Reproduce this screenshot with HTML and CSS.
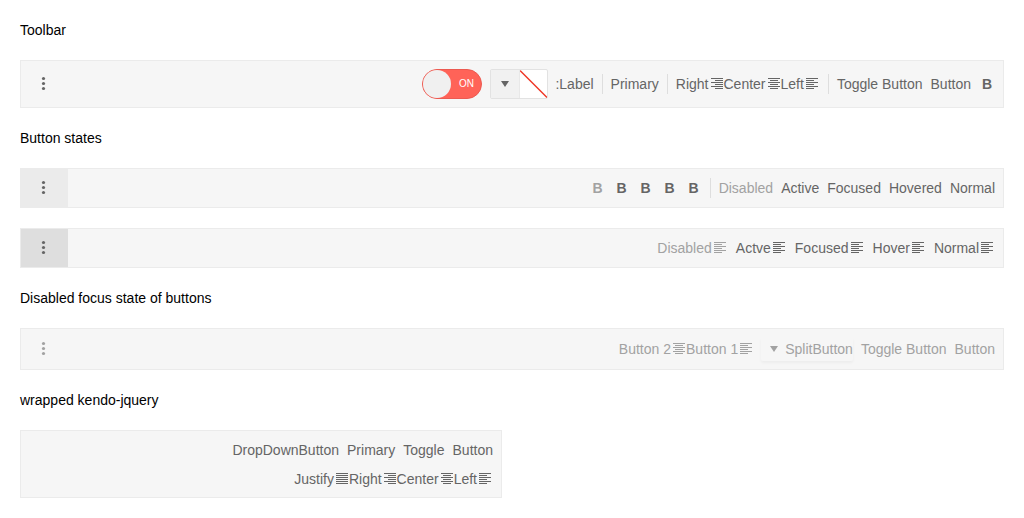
FILE: index.html
```
<!DOCTYPE html>
<html lang="en">
<head>
<meta charset="utf-8">
<title>Toolbar</title>
<link rel="stylesheet" href="styles.css">
</head>
<body>
<svg class="defs" width="0" height="0">
  <symbol id="left" viewBox="0 0 16 16"><path d="M2 2h12v1H2zM2 4h8v1H2zM2 6h12v1H2zM2 8h8v1H2zM2 10h12v1H2zM2 12h8v1H2z"/></symbol>
  <symbol id="center" viewBox="0 0 16 16"><path d="M2 2h12v1H2zM4 4h8v1H4zM2 6h12v1H2zM4 8h8v1H4zM2 10h12v1H2zM4 12h8v1H4z"/></symbol>
  <symbol id="right" viewBox="0 0 16 16"><path d="M2 2h12v1H2zM6 4h8v1H6zM2 6h12v1H2zM6 8h8v1H6zM2 10h12v1H2zM6 12h8v1H6z"/></symbol>
  <symbol id="justify" viewBox="0 0 16 16"><path d="M2 2h12v1H2zM2 4h12v1H2zM2 6h12v1H2zM2 8h12v1H2zM2 10h12v1H2zM2 12h12v1H2z"/></symbol>
  <symbol id="dots" viewBox="0 0 16 16"><circle cx="7.5" cy="2.5" r="1.6"/><circle cx="7.5" cy="7.5" r="1.6"/><circle cx="7.5" cy="12.5" r="1.6"/></symbol>
  <symbol id="caret" viewBox="0 0 16 16"><path d="M4 5h8l-4 6z"/></symbol>
</svg>
<main class="page">
  <h2 class="title">Toolbar</h2>
  <div class="toolbar tall">
    <div class="overflow"><svg class="icon"><use href="#dots"/></svg></div>
    <div class="tools">
      <div class="switch"><span class="handle"></span><span class="on">ON</span></div>
      <div class="picker"><div class="picker-arrow"><svg class="icon"><use href="#caret"/></svg></div><svg class="swatch" viewBox="0 0 28 28"><path d="M0 0L28 28"/></svg></div>
      <span class="label">:Label</span>
      <i class="separator"></i>
      <span>Primary</span>
      <i class="separator"></i>
      <div class="group"><span>Right</span><svg class="icon"><use href="#right"/></svg><span>Center</span><svg class="icon"><use href="#center"/></svg><span>Left</span><svg class="icon"><use href="#left"/></svg></div>
      <i class="separator"></i>
      <span>Toggle Button</span>
      <span>Button</span>
      <b class="bold">B</b>
    </div>
  </div>

  <h2 class="title">Button states</h2>
  <div class="toolbar">
    <div class="overflow hovered"><svg class="icon"><use href="#dots"/></svg></div>
    <div class="tools">
      <b class="bold disabled">B</b><b class="bold">B</b><b class="bold">B</b><b class="bold">B</b><b class="bold">B</b>
      <i class="separator"></i>
      <span class="disabled">Disabled</span>
      <span>Active</span>
      <span>Focused</span>
      <span>Hovered</span>
      <span>Normal</span>
    </div>
  </div>
  <div class="toolbar">
    <div class="overflow active"><svg class="icon"><use href="#dots"/></svg></div>
    <div class="tools">
      <div class="group disabled"><span>Disabled</span><svg class="icon"><use href="#left"/></svg></div>
      <div class="group"><span>Actve</span><svg class="icon"><use href="#left"/></svg></div>
      <div class="group"><span>Focused</span><svg class="icon"><use href="#left"/></svg></div>
      <div class="group"><span>Hover</span><svg class="icon"><use href="#left"/></svg></div>
      <div class="group"><span>Normal</span><svg class="icon"><use href="#left"/></svg></div>
    </div>
  </div>

  <h2 class="title">Disabled focus state of buttons</h2>
  <div class="toolbar medium">
    <div class="overflow disabled"><svg class="icon"><use href="#dots"/></svg></div>
    <div class="tools disabled">
      <div class="group"><span>Button 2</span><svg class="icon"><use href="#center"/></svg><span>Button 1</span><svg class="icon"><use href="#left"/></svg></div>
      <div class="split"><svg class="icon"><use href="#caret"/></svg><span>SplitButton</span></div>
      <span>Toggle Button</span>
      <span>Button</span>
    </div>
  </div>

  <h2 class="title">wrapped kendo-jquery</h2>
  <div class="toolbar wrapped">
    <div class="tools"><span>DropDownButton</span><span>Primary</span><span>Toggle</span><span>Button</span></div>
    <div class="tools">
      <div class="group"><span>Justify</span><svg class="icon"><use href="#justify"/></svg><span>Right</span><svg class="icon"><use href="#right"/></svg><span>Center</span><svg class="icon"><use href="#center"/></svg><span>Left</span><svg class="icon"><use href="#left"/></svg></div>
    </div>
  </div>
</main>
</body>
</html>
```
FILE: styles.css
```
* { box-sizing: border-box; }
body { margin: 0; background: #fff; font: 14px/20px "Liberation Sans", Arial, sans-serif; color: #000; }
.defs { display: none; }
.page { display: flex; flex-direction: column; gap: 20px; padding: 20px; }
.title { margin: 0; font-size: 14px; font-weight: 400; }
.toolbar { display: flex; justify-content: space-between; height: 40px; border: 1px solid #ebebeb; background: #f6f6f6; color: #656565; white-space: nowrap; }
.toolbar.tall { height: 48px; }
.toolbar.medium { height: 42px; }
.toolbar.wrapped { flex-direction: column; justify-content: flex-start; gap: 8px; width: 482px; height: 68px; padding: 8px 0; }
.wrapped .tools { height: 21px; justify-content: flex-end; }
.overflow { display: flex; align-items: center; width: 47px; padding-left: 15px; }
.overflow.hovered { background: #ebebeb; }
.overflow.active { background: #dedede; }
.tools { display: flex; align-items: center; gap: 8px; padding-right: 8px; }
.disabled { color: #a2a2a2; }
.icon { display: block; flex: none; width: 16px; height: 16px; fill: currentColor; }
.group { display: flex; align-items: center; }
.group .icon + span { margin-left: -1px; }
.wrapped .group { height: 20px; }
.bold { width: 16px; text-align: center; }
.label { margin-left: -.6px; }
.separator { width: 1px; height: 20px; background: #dedede; }
.switch { display: flex; align-items: center; justify-content: space-between; width: 60px; height: 30px; padding-right: 7px; border: 1px solid #ec5a51; border-radius: 15px; background: #ff6358; color: #fff; font-size: 10px; }
.handle { width: 28px; height: 28px; border-radius: 50%; background: #f0f0f0; }
.picker { display: flex; width: 58px; height: 30px; border: 1px solid #e2e2e2; border-radius: 2px; background: #fff; }
.picker-arrow { display: flex; align-items: center; width: 29px; padding-left: 6px; border-right: 1px solid #e8e8e8; background: #f1f1f1; }
.swatch { width: 27px; height: 28px; }
.swatch path { fill: none; stroke: #ee3524; stroke-width: 1.4; }
.split { display: flex; align-items: center; height: 24px; margin-left: -1px; padding-left: 5px; gap: 3px; border-radius: 2px; box-shadow: 0 2px 3px rgba(0, 0, 0, .04); }
```
